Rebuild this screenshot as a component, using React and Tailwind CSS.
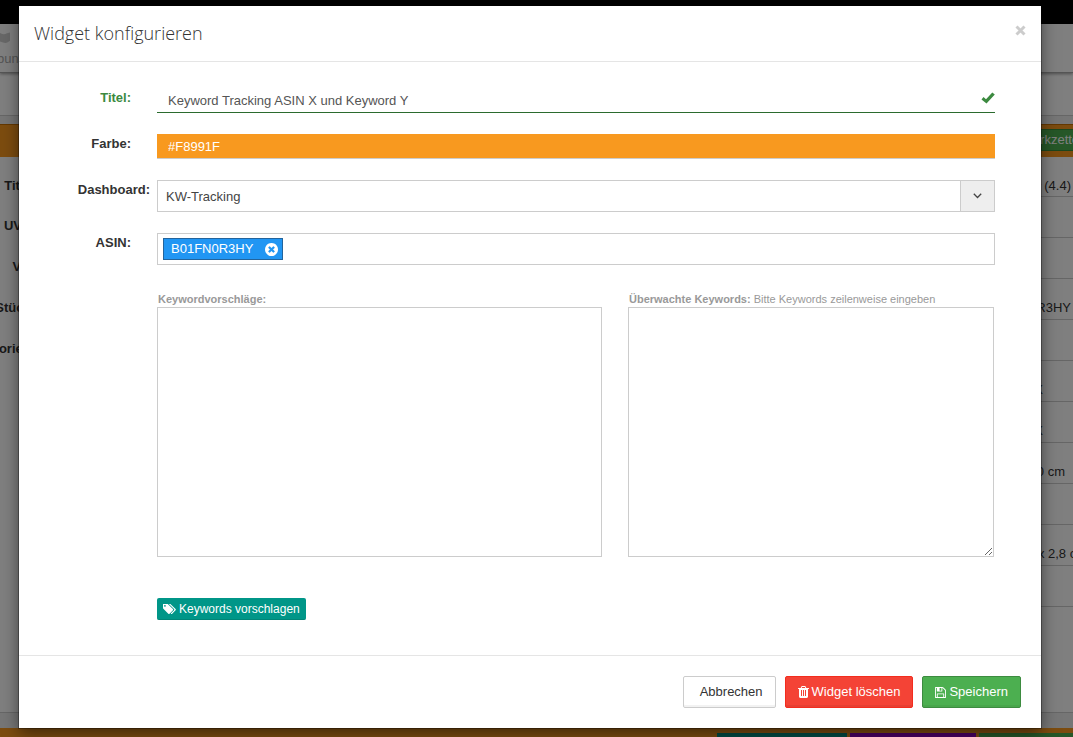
const FONT = "font-['Liberation_Sans',Arial,sans-serif]";

function Icon({ path, viewBox, className }) {
  return (
    <svg viewBox={viewBox} fill="currentColor" aria-hidden="true" className={className}>
      <path d={path} />
    </svg>
  );
}

const TRASH =
  'M704 1376v-704q0-14-9-23t-23-9h-64q-14 0-23 9t-9 23v704q0 14 9 23t23 9h64q14 0 23-9t9-23zm256 0v-704q0-14-9-23t-23-9h-64q-14 0-23 9t-9 23v704q0 14 9 23t23 9h64q14 0 23-9t9-23zm256 0v-704q0-14-9-23t-23-9h-64q-14 0-23 9t-9 23v704q0 14 9 23t23 9h64q14 0 23-9t9-23zm-544-992h448l-48-117q-7-9-17-11h-317q-10 2-17 11zm928 32v64q0 14-9 23t-23 9h-96v948q0 83-47 143.5t-113 60.5h-832q-66 0-113-58.5t-47-141.5v-952h-96q-14 0-23-9t-9-23v-64q0-14 9-23t23-9h309l70-167q15-37 54-63t79-26h320q40 0 79 26t54 63l70 167h309q14 0 23 9t9 23z';
const FLOPPY =
  'M512 1536h768v-384h-768v384zm896 0h128v-896q0-14-10-38.5t-20-34.5l-281-281q-10-10-34-20t-39-10v416q0 40-28 68t-68 28h-576q-40 0-68-28t-28-68v-416h-128v1280h128v-416q0-40 28-68t68-28h832q40 0 68 28t28 68v416zm-384-928v-320q0-13-9.5-22.5t-22.5-9.5h-192q-13 0-22.5 9.5t-9.5 22.5v320q0 13 9.5 22.5t22.5 9.5h192q13 0 22.5-9.5t9.5-22.5zm640 32v928q0 40-28 68t-68 28h-1344q-40 0-68-28t-28-68v-1344q0-40 28-68t68-28h928q40 0 88 20t76 48l280 280q28 28 48 76t20 88z';
const TAGS =
  'M384 448q0-53-37.5-90.5t-90.5-37.5-90.5 37.5-37.5 90.5 37.5 90.5 90.5 37.5 90.5-37.5 37.5-90.5zm1067 576q0 53-37 90l-491 492q-39 37-91 37-53 0-90-37l-715-716q-38-37-64.5-101t-26.5-117v-416q0-52 38-90t90-38h416q53 0 117 26.5t102 64.5l715 714q37 39 37 91zm384 0q0 53-37 90l-491 492q-39 37-91 37-36 0-59-14t-53-45l470-470q37-37 37-90 0-52-37-91l-715-714q-38-38-102-64.5t-117-26.5h224q53 0 117 26.5t102 64.5l715 714q37 39 37 91z';
const TIMES_CIRCLE =
  'M1277 1122q0-26-19-45l-181-181 181-181q19-19 19-45 0-27-19-46l-90-90q-19-19-46-19-26 0-45 19l-181 181-181-181q-19-19-45-19-27 0-46 19l-90 90q-19 19-19 46 0 26 19 45l181 181-181 181q-19 19-19 45 0 27 19 46l90 90q19 19 46 19 26 0 45-19l181-181 181 181q19 19 45 19 27 0 46-19l90-90q19-19 19-46zm387-226q0 209-103 385.5t-279.5 279.5-385.5 103-385.5-103-279.5-279.5-103-385.5 103-385.5 279.5-279.5 385.5-103 385.5 103 279.5 279.5 103 385.5z';

const ROWS = [
  { label: 'Titel:', value: '(4.4)', star: true, inset: 'pr-[2px]' },
  { label: 'UVP:' },
  { label: 'VK:' },
  { label: 'Stück:', value: 'R3HY', inset: 'pr-[2px]' },
  { label: 'orien:' },
  { value: 'X', inset: 'pr-[30px]' },
  { value: 'X', inset: 'pr-[30px]' },
  { value: '0 cm', inset: 'pr-2' },
  {},
  { value: 'x 2,8 cm', inset: '-mr-[14px]' },
  {},
];

function ProductPage() {
  return (
    <div aria-hidden="true" className="flex h-full flex-col overflow-hidden bg-[#ededed] text-[13px] leading-5 text-[#333]">
      <div className="h-6 shrink-0 bg-black" />
      <div className="z-10 flex h-[49px] shrink-0 flex-col border-b border-[#aaa] bg-white shadow-[0_1px_3px_rgba(0,0,0,0.4)]">
        <svg viewBox="0 0 10 11" className="mt-2 h-[11px] w-[10px]" fill="#cfcfcf">
          <path d="M0 1 C2 2.500 5 2.500 7 1.200 L10 0.500 V8.800 C8 10.500 6 11.500 3 10.500 L0 9.500 Z" />
        </svg>
        <span className="-ml-[3px] mt-[6px] text-[#aaa]">bung</span>
      </div>
      <div className="h-[43px] shrink-0 border-b border-[#ccc] bg-white" />
      <div className="mt-2 flex h-[33px] shrink-0 items-start justify-end border-t border-[#c87000] bg-[#f8991f] pt-1">
        <span className="-mr-[10px] flex h-[22px] items-center border border-[#388e3c] bg-[#4caf50] pl-1 leading-[18px] text-white">
          Merkzettel
        </span>
      </div>
      <div className="grow border-b border-[#ccc] bg-white">
        {ROWS.map((row, i) => (
          <div key={i} className={i === 0 ? 'flex h-[40px]' : 'flex h-[41px]'}>
            <span className="flex w-[35px] shrink-0 justify-end pt-[19px] font-bold">{row.label}</span>
            <span className="flex grow justify-end border-b border-[#ccc] pt-[19px]">
              <span className={`flex gap-px whitespace-nowrap ${row.inset ?? ''}`}>
                {row.star && <span className="text-[#f8991f]">★</span>}
                {row.value}
              </span>
            </span>
          </div>
        ))}
      </div>
      <div className="h-[15px] shrink-0" />
      <div className="flex h-[9px] shrink-0 items-end justify-end gap-[3px] bg-[#f8991f]">
        <span className="h-1 w-[130px] bg-[#009688]" />
        <span className="h-1 w-[126px] bg-[#9500c8]" />
        <span className="h-1 w-[94px] bg-[#4caf50]" />
      </div>
    </div>
  );
}

function Row({ label, htmlFor, tone = 'text-[#333] pt-[2px]', shift = 'pr-[26px]', className, children }) {
  return (
    <div className={`flex items-start ${className}`}>
      <label
        htmlFor={htmlFor}
        className={`w-[138px] shrink-0 text-right text-[13px] leading-4 font-bold ${tone} ${shift}`}
      >
        {label}
      </label>
      <div className="min-w-0 grow">{children}</div>
    </div>
  );
}

export default function App() {
  return (
    <div className={`relative min-h-screen ${FONT}`}>
      <div className="absolute inset-0 isolate">
        <ProductPage />
      </div>
      <div className="absolute inset-0 bg-black/50" />

      <div
        role="dialog"
        aria-labelledby="dialog-title"
        className="relative flex min-h-screen pt-[6px] pr-8 pb-[9px] pl-[19px]"
      >
        <div className="flex grow flex-col bg-white shadow-[0_0_0_1px_rgba(0,0,0,0.3),0_5px_15px_rgba(0,0,0,0.5)]">
          <header className="flex items-start justify-between border-b border-[#e5e5e5] p-[15px]">
            <h1
              id="dialog-title"
              className="font-['Open_Sans',sans-serif] text-lg leading-[25px] font-light text-[#333]"
            >
              Widget konfigurieren
            </h1>
            <button type="button" aria-label="Schließen" className="mt-1 text-[#ccc]">
              <svg viewBox="0 0 11 11" className="h-[11px] w-[11px]" stroke="currentColor" strokeWidth="3">
                <path d="M1.500 1.500 L9.500 9.500 M9.500 1.500 L1.500 9.500" />
              </svg>
            </button>
          </header>

          <form className="flex grow flex-col pt-7 pr-[46px]" onSubmit={(e) => e.preventDefault()}>
            <Row label="Titel:" htmlFor="title" tone="text-[#3c8a40]" className="h-[44px]">
              <div className="flex h-[23px] items-center border-b border-[#2b6b2e]">
                <input
                  id="title"
                  defaultValue="Keyword Tracking ASIN X und Keyword Y"
                  className="h-full min-w-0 grow bg-transparent px-[11px] pb-px text-[13px] text-[#555] outline-none"
                />
                <svg viewBox="0 0 14 12" className="mb-[6px] h-3 w-[14px] text-[#3c8a40]" fill="currentColor">
                  <path d="M11.300 0.400 L13.800 2.500 L5.500 11.600 L0.500 7.600 L2.500 5 L5 7.200 Z" />
                </svg>
              </div>
            </Row>

            <Row label="Farbe:" htmlFor="color" className="h-[46px]">
              <input
                id="color"
                defaultValue="#F8991F"
                className="block h-[25px] w-full border-b border-[#ccc] bg-[#f8991f] px-[11px] text-[13px] text-white outline-none"
              />
            </Row>

            <Row label="Dashboard:" htmlFor="dashboard" shift="pr-[7px]" className="h-[53px]">
              <div className="grid">
                <select
                  id="dashboard"
                  className="col-start-1 row-start-1 h-8 w-full appearance-none border border-[#ccc] bg-white px-2 pt-[2px] text-[13px] text-[#444] outline-none"
                >
                  <option>KW-Tracking</option>
                </select>
                <span className="pointer-events-none col-start-1 row-start-1 flex h-8 w-[35px] items-center justify-center justify-self-end border border-[#ccc] bg-[#eee]">
                  <svg viewBox="0 0 9 6" className="h-[6px] w-[9px]" fill="none" stroke="#444" strokeWidth="1.300">
                    <path d="M0.800 0.800 L4.500 4.500 L8.200 0.800" />
                  </svg>
                </span>
              </div>
            </Row>

            <Row label="ASIN:" htmlFor="asin" className="h-[60px]">
              <div className="flex h-8 items-center border border-[#ccc] px-[5px]">
                <span className="flex h-[22px] items-center gap-3 border border-[#23649c] bg-[#2196f3] pr-1 pl-[7px] text-[13px] text-white">
                  B01FN0R3HY
                  <button type="button" aria-label="B01FN0R3HY entfernen">
                    <Icon path={TIMES_CIRCLE} viewBox="128 128 1536 1536" className="h-[13px] w-[13px]" />
                  </button>
                </span>
                <input id="asin" className="min-w-0 grow outline-none" />
              </div>
            </Row>

            <div className="flex gap-[26px] pl-[138px] text-[11px] leading-3 text-[#999]">
              <div className="flex grow flex-col gap-[2px]">
                <label htmlFor="suggestions" className="pl-px font-bold">
                  Keywordvorschläge:
                </label>
                <textarea
                  id="suggestions"
                  className="h-[250px] w-full resize-none border border-[#ccc] outline-none"
                />
              </div>
              <div className="mr-px flex w-[366px] shrink-0 flex-col gap-[2px]">
                <label htmlFor="tracked" className="pl-px">
                  <b>Überwachte Keywords:</b> Bitte Keywords zeilenweise eingeben
                </label>
                <textarea id="tracked" className="h-[250px] w-full border border-[#ccc] outline-none" />
              </div>
            </div>

            <div className="pt-[41px] pb-[35px] pl-[138px]">
              <button
                type="button"
                className="flex h-[22px] items-center gap-[3px] rounded-[2px] border-b border-[#008577] bg-[#009688] px-[6px] text-xs text-white"
              >
                <Icon path={TAGS} viewBox="0 192 1835 1451" className="h-[10px] w-[13px]" />
                Keywords vorschlagen
              </button>
            </div>
          </form>

          <footer className="flex justify-end gap-[9px] border-t border-[#e5e5e5] p-5">
            <button
              type="button"
              className="h-8 rounded-[2px] border border-[#ccc] bg-white pr-3 pl-4 text-[13px] text-[#333] shadow-[inset_0_-2px_0_rgba(0,0,0,0.05)]"
            >
              Abbrechen
            </button>
            <button
              type="button"
              className="flex h-8 items-center gap-[3px] rounded-[2px] border border-[#f32c1e] bg-[#f44336] px-3 text-[13px] text-white shadow-[inset_0_-2px_0_rgba(0,0,0,0.05)]"
            >
              <Icon path={TRASH} viewBox="192 128 1408 1536" className="h-[12px] w-[11px]" />
              Widget löschen
            </button>
            <button
              type="button"
              className="flex h-8 items-center gap-[3px] rounded-[2px] border border-[#3d8b40] bg-[#4caf50] px-3 text-[13px] text-white shadow-[inset_0_-2px_0_rgba(0,0,0,0.05)]"
            >
              <Icon path={FLOPPY} viewBox="128 128 1536 1536" className="h-[11px] w-[11px]" />
              Speichern
            </button>
          </footer>
        </div>
      </div>
    </div>
  );
}
